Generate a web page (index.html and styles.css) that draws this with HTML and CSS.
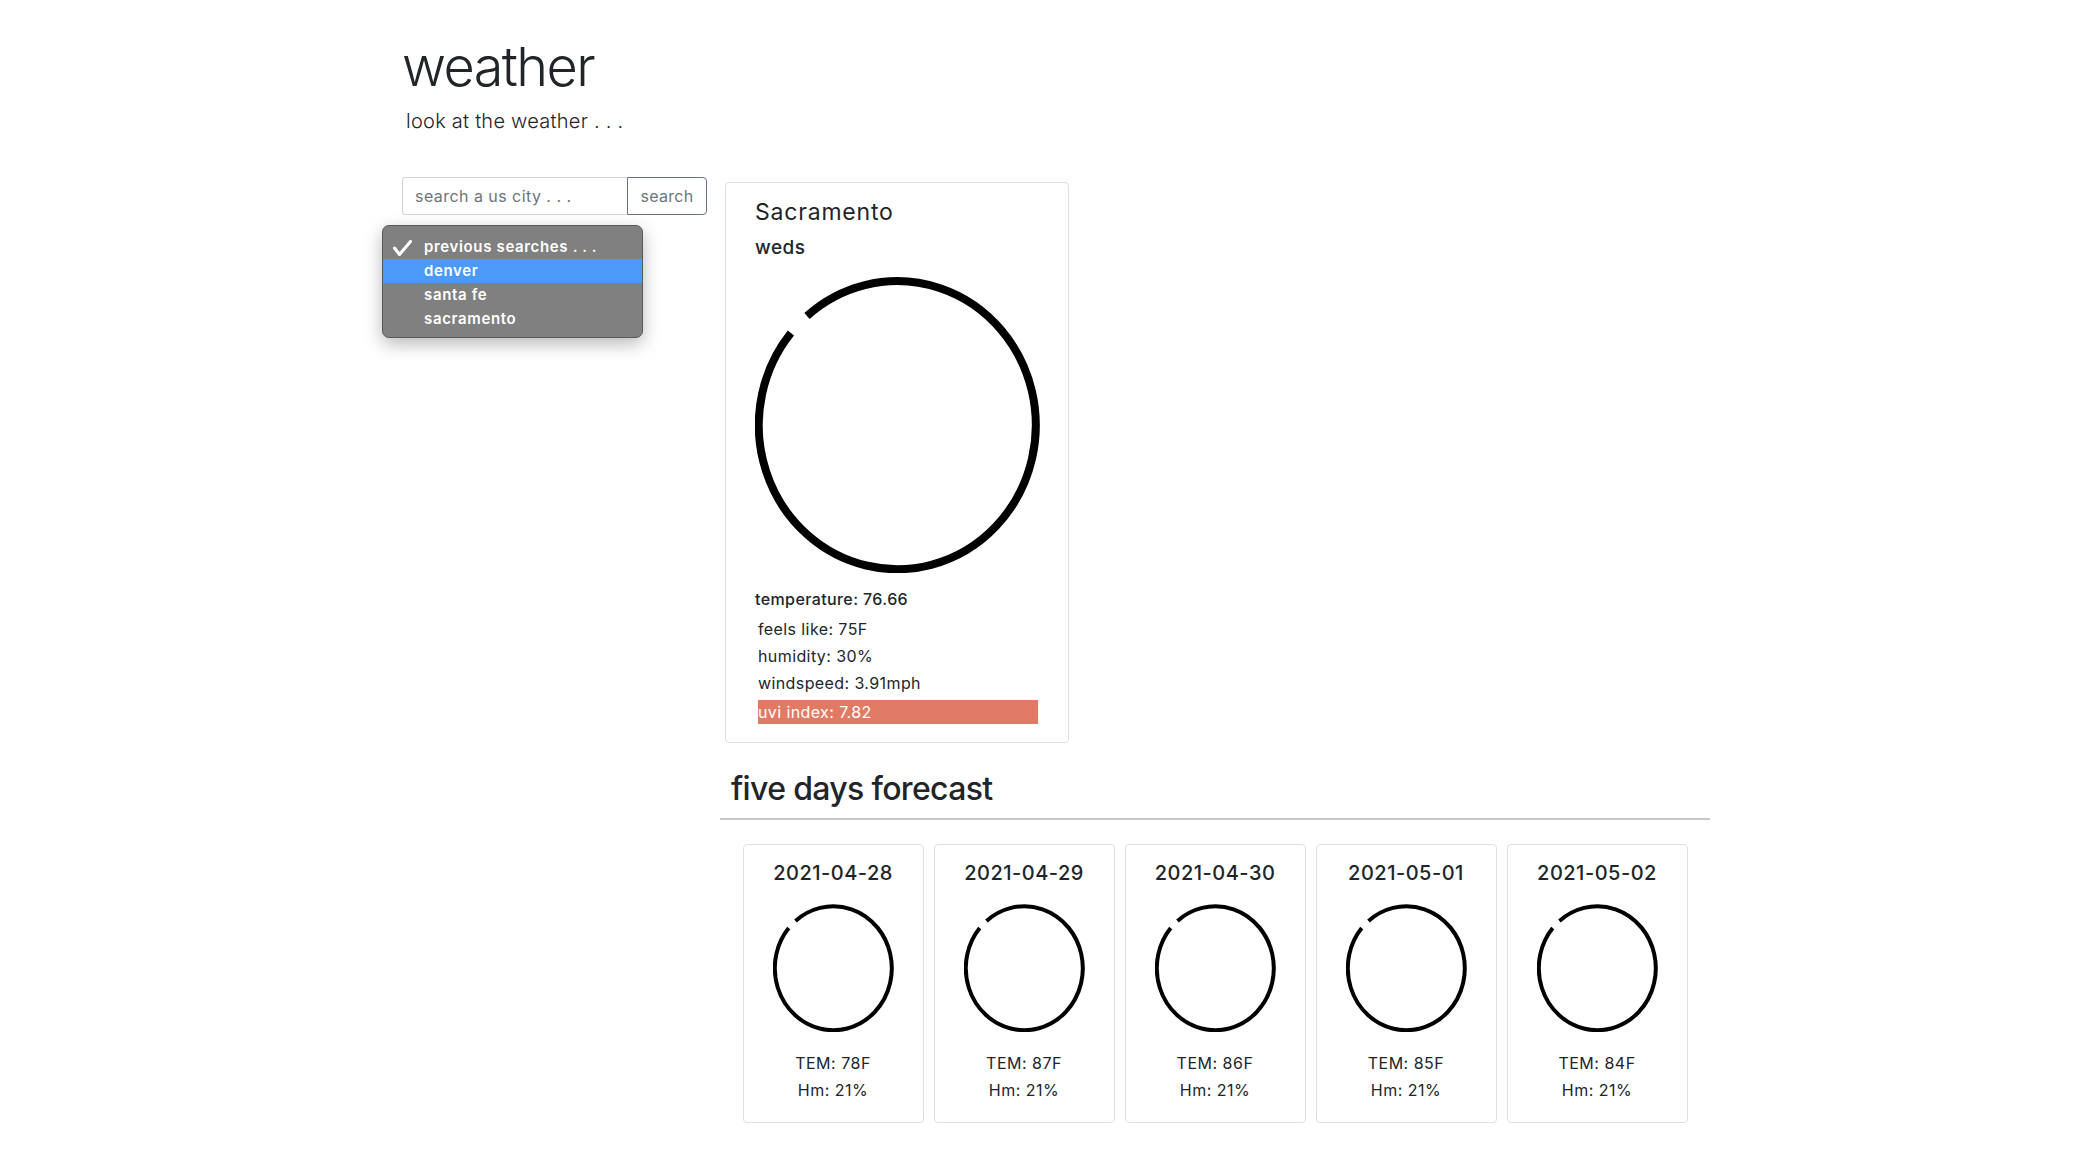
FILE: index.html
```html
<!DOCTYPE html>
<html lang="en">
<head>
<meta charset="utf-8">
<title>weather</title>
<link rel="stylesheet" href="styles.css">
</head>
<body>
<div class="page">
  <header class="hero">
    <h1 class="hero-title">weather</h1>
    <p class="lead">look at the weather . . .</p>
  </header>
  <main class="layout">
    <aside class="search-col">
      <form class="search-form">
        <input class="search-input" type="text" placeholder="search a us city . . .">
        <button class="search-btn" type="button">search</button>
      </form>
      <div class="history-menu">
        <div class="menu-item">
          <svg class="check" width="19" height="16" viewBox="0 0 19 16"><path d="M1.5 8 L6.5 14.5 L17.5 1.5" fill="none" stroke="#fff" stroke-width="3" stroke-linecap="round" stroke-linejoin="round"/></svg>
          previous searches . . .
        </div>
        <div class="menu-item active">denver</div>
        <div class="menu-item">santa fe</div>
        <div class="menu-item">sacramento</div>
      </div>
    </aside>
    <section class="content">
      <div class="today-card">
        <h4 class="today-city">Sacramento</h4>
        <h6 class="today-day">weds</h6>
        <svg class="today-icon" width="285" height="296" viewBox="0 0 285 296"><path d="M52 39 A138.5 144 0 1 1 35.9 56" fill="none" stroke="#000" stroke-width="8"/></svg>
        <p class="today-temp">temperature: 76.66</p>
        <ul class="today-list">
          <li>feels like: 75F</li>
          <li>humidity: 30%</li>
          <li>windspeed: 3.91mph</li>
        </ul>
        <div class="uvi">uvi index: 7.82</div>
      </div>
      <h2 class="forecast-title">five days forecast</h2>
      <hr class="forecast-rule">
      <div class="forecast-row">
        <div class="day-card">
          <h5 class="day-date">2021-04-28</h5>
          <svg class="day-icon" width="121" height="128" viewBox="0 0 121 128"><path d="M22.5 16.9 A58.5 62 0 1 1 15.7 24.1" fill="none" stroke="#000" stroke-width="4"/></svg>
          <p class="day-line">TEM: 78F</p>
          <p class="day-line">Hm: 21%</p>
        </div>
        <div class="day-card">
          <h5 class="day-date">2021-04-29</h5>
          <svg class="day-icon" width="121" height="128" viewBox="0 0 121 128"><path d="M22.5 16.9 A58.5 62 0 1 1 15.7 24.1" fill="none" stroke="#000" stroke-width="4"/></svg>
          <p class="day-line">TEM: 87F</p>
          <p class="day-line">Hm: 21%</p>
        </div>
        <div class="day-card">
          <h5 class="day-date">2021-04-30</h5>
          <svg class="day-icon" width="121" height="128" viewBox="0 0 121 128"><path d="M22.5 16.9 A58.5 62 0 1 1 15.7 24.1" fill="none" stroke="#000" stroke-width="4"/></svg>
          <p class="day-line">TEM: 86F</p>
          <p class="day-line">Hm: 21%</p>
        </div>
        <div class="day-card">
          <h5 class="day-date">2021-05-01</h5>
          <svg class="day-icon" width="121" height="128" viewBox="0 0 121 128"><path d="M22.5 16.9 A58.5 62 0 1 1 15.7 24.1" fill="none" stroke="#000" stroke-width="4"/></svg>
          <p class="day-line">TEM: 85F</p>
          <p class="day-line">Hm: 21%</p>
        </div>
        <div class="day-card">
          <h5 class="day-date">2021-05-02</h5>
          <svg class="day-icon" width="121" height="128" viewBox="0 0 121 128"><path d="M22.5 16.9 A58.5 62 0 1 1 15.7 24.1" fill="none" stroke="#000" stroke-width="4"/></svg>
          <p class="day-line">TEM: 84F</p>
          <p class="day-line">Hm: 21%</p>
        </div>
      </div>
    </section>
  </main>
</div>
</body>
</html>
```

FILE: styles.css
```css
* { box-sizing: border-box; }

body {
  margin: 0;
  background: #fff;
  color: #212529;
  font-family: Inter, "Noto Sans", "Liberation Sans", sans-serif;
  font-size: 16px;
  line-height: 1.5;
  letter-spacing: 0.4px;
}

.page {
  padding: 34px 0 40px 402px;
}

.hero-title {
  margin: 0;
  font-size: 54px;
  font-weight: 300;
  line-height: 65px;
  letter-spacing: -1.6px;
}

.lead {
  margin: 7px 0 0;
  padding-left: 4px;
  font-size: 20px;
  font-weight: 300;
  line-height: 30px;
  letter-spacing: 0.25px;
}

.layout {
  display: flex;
  margin-top: 41px;
}

.search-col {
  position: relative;
  width: 318px;
  flex: none;
}

.search-form {
  display: flex;
  width: 305px;
}

.search-input {
  width: 225px;
  height: 38px;
  padding: 6px 12px;
  border: 1px solid #ced4da;
  border-right: none;
  border-radius: 4px 0 0 4px;
  font-family: inherit;
  font-size: 16px;
  letter-spacing: 0.45px;
  color: #495057;
  outline: none;
}

.search-input::placeholder {
  color: #6c757d;
}

.search-btn {
  width: 80px;
  height: 38px;
  padding: 0;
  border: 1px solid #6c757d;
  border-radius: 0 4px 4px 0;
  background: #fff;
  color: #6c757d;
  font-family: inherit;
  font-size: 16px;
  letter-spacing: 0.3px;
}

.history-menu {
  position: absolute;
  left: -20px;
  top: 48px;
  width: 261px;
  height: 113px;
  padding-top: 9px;
  background: #808080;
  border: 1px solid #5a5a5a;
  border-radius: 7px;
  box-shadow: 0 6px 18px rgba(0, 0, 0, 0.28);
}

.menu-item {
  position: relative;
  height: 24px;
  padding-left: 41px;
  color: #fff;
  font-size: 15px;
  font-weight: 600;
  line-height: 24px;
  letter-spacing: 0.65px;
}

.menu-item.active {
  background: #4a9af9;
}

.check {
  position: absolute;
  left: 10px;
  top: 5px;
}

.content {
  width: 990px;
  flex: none;
}

.today-card {
  width: 344px;
  margin: 5px 0 0 5px;
  padding: 16px 28px 18px 29px;
  border: 1px solid #dfdfdf;
  border-radius: 4px;
}

.today-city {
  margin: 0;
  font-size: 23px;
  font-weight: 400;
  line-height: 26px;
  letter-spacing: 0.8px;
}

.today-day {
  margin: 11px 0 0;
  font-size: 19px;
  font-weight: 500;
  line-height: 23px;
  letter-spacing: 0.5px;
}

.today-icon {
  display: block;
  margin-top: 18px;
}

.today-temp {
  margin: 14px 0 0;
  font-weight: 500;
  line-height: 24px;
}

.today-list {
  list-style: none;
  margin: 5px 0 0;
  padding: 0 0 0 3px;
}

.today-list li {
  line-height: 27px;
}

.uvi {
  margin: 3px 0 0 3px;
  width: 280px;
  height: 24px;
  background: #e07a64;
  color: #fff;
  line-height: 24px;
}

.forecast-title {
  margin: 27px 0 0;
  padding-left: 11px;
  font-size: 32px;
  font-weight: 500;
  line-height: 38px;
  letter-spacing: -0.65px;
}

.forecast-rule {
  margin: 10px 0 0;
  border: none;
  border-top: 2px solid #c8c8c8;
}

.forecast-row {
  display: flex;
  justify-content: center;
  gap: 10px;
  margin-top: 24px;
}

.day-card {
  width: 181px;
  height: 279px;
  padding-top: 16px;
  border: 1px solid #dfdfdf;
  border-radius: 4px;
  text-align: center;
}

.day-date {
  margin: 0;
  font-size: 20px;
  font-weight: 500;
  line-height: 24px;
  letter-spacing: 0.5px;
}

.day-icon {
  display: block;
  margin: 19px auto 0;
}

.day-line {
  margin: 0;
  line-height: 27px;
  letter-spacing: 0.5px;
}

.day-icon + .day-line {
  margin-top: 18px;
}
```
